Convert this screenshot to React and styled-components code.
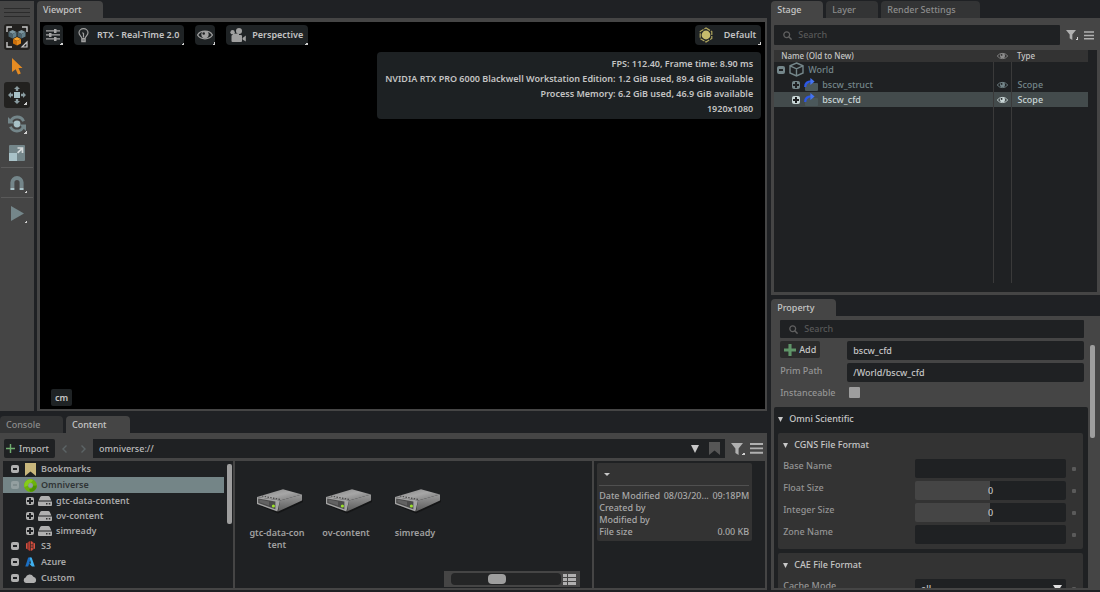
import React, { useState } from 'react';
import styled, { createGlobalStyle, css } from 'styled-components';

const GlobalStyle = createGlobalStyle`
  * { box-sizing: border-box; }

  body {
    margin: 0;
    background: #1f2124;
    overflow: hidden;
  }

  body, button, input, select, table {
    font-family: "Noto Sans", "Open Sans", sans-serif;
    font-size: 9px;
    font-weight: 500;
    line-height: 12px;
    color: #bcbcbc;
  }

  button, input, select {
    margin: 0;
    padding: 0;
    border: 0;
    border-radius: 0;
    background: none;
    outline: none;
  }
`;

/* ---------- icons ---------- */

const Svg = styled.svg`
  display: block;
  flex: none;
  fill: ${p => p.$fill || 'currentColor'};
`;

function Icon({ w, h, box, fill, children }) {
  return (
    <Svg width={w} height={h || w} viewBox={box || `0 0 ${w} ${h || w}`} $fill={fill} aria-hidden="true">
      {children}
    </Svg>
  );
}

const Cube = ({ x, y, top, left, right }) => (
  <g transform={`translate(${x} ${y})`}>
    <path d="M4 0 8 2 4 4 0 2z" fill={top} />
    <path d="M0 2 4 4V8.5L0 6.5z" fill={left} />
    <path d="M8 2 4 4V8.5L8 6.5z" fill={right} />
  </g>
);

const SelectModeIcon = () => (
  <Icon w={22}>
    <path d="M1 6V1H6M16 1H21V6M1 16V21H6" fill="none" stroke="#c8c8c8" strokeWidth="1.4" />
    <path d="M21 16V21H16z" fill="none" stroke="#c8c8c8" strokeWidth="1.2" />
    <Cube x={2.5} y={4} top="#7d97a0" left="#4b626c" right="#62808b" />
    <Cube x={11.5} y={4} top="#7d97a0" left="#4b626c" right="#62808b" />
    <Cube x={7} y={11} top="#f7a52f" left="#c96f0c" right="#e48a1c" />
  </Icon>
);

const CursorIcon = () => (
  <Icon w={12} h={17} fill="#e58b22">
    <path d="M1 0 11.5 10H7.5L9.8 15.4 7 16.6 4.7 11.2 1 14z" />
  </Icon>
);

const MoveIcon = () => (
  <Icon w={18} fill="#8a9ca1">
    <rect x="6" y="6" width="6" height="6" fill="#a9c2c8" />
    <path d="M9 0 12 3H10.2V5H7.8V3H6zM9 18 6 15H7.8V13H10.2V15H12zM0 9 3 6V7.8H5V10.2H3V12zM18 9 15 12V10.2H13V7.8H15V6z" />
  </Icon>
);

const RotateIcon = () => (
  <Icon w={18} fill="#74868a">
    <circle cx="9" cy="9" r="3.4" fill="#a9c2c8" />
    <path d="M2.6 6.6A7 7 0 0 1 15.6 6.2" fill="none" stroke="#74868a" strokeWidth="2.8" />
    <path d="M15.4 11.4A7 7 0 0 1 2.4 11.8" fill="none" stroke="#74868a" strokeWidth="2.8" />
    <path d="M0 2V8.6H6.6zM18 16V9.4H11.4z" />
  </Icon>
);

const ScaleIcon = () => (
  <Icon w={16} fill="#74868a">
    <rect width="16" height="16" rx="1" />
    <rect y="8" width="8" height="8" fill="#a9c2c8" />
    <path d="M8.5 3H13.5V8M13.2 3.3 8.6 7.9" fill="none" stroke="#d5dadb" strokeWidth="1.7" />
  </Icon>
);

const MagnetIcon = () => (
  <Icon w={14}>
    <path d="M2.4 11V6.6A4.6 4.6 0 0 1 11.6 6.6V11" fill="none" stroke="#74868a" strokeWidth="4" />
    <path d="M.4 11.5H4.4V14H.4zM9.6 11.5H13.6V14H9.6z" fill="#a9c2c8" />
  </Icon>
);

const PlayIcon = () => (
  <Icon w={13} h={15} fill="#74868a"><path d="M0 0 13 7.5 0 15z" /></Icon>
);

const SlidersIcon = () => (
  <Icon w={14} h={12} fill="#a8a8a8">
    <path d="M0 1.2H14V2.6H0zM0 5.2H14V6.6H0zM0 9.2H14V10.6H0z" />
    <path d="M8 0H10.5V4H8zM3 4H5.5V8H3zM8 8H10.5V12H8z" />
  </Icon>
);

const BulbIcon = () => (
  <Icon w={11} h={15}>
    <path d="M3.8 10C3.6 8.4 1 7.4 1 4.8A4.5 4.2 0 0 1 10 4.8C10 7.4 7.4 8.4 7.2 10V13.6H3.8zM3.8 10.6H7.2M3.8 12.2H7.2M5.5 9.6V5.6L4.4 4.6" fill="none" stroke="#a0a0a0" strokeWidth="1.2" />
  </Icon>
);

const EyeIcon = ({ w = 14, h = 10, color = '#a0a0a0', hole = '#1f2123' }) => (
  <Icon w={w} h={h} box="0 0 14 10">
    <path d="M.5 5C3 .6 11 .6 13.5 5 11 9.4 3 9.4 .5 5z" fill="none" stroke={color} strokeWidth="1.1" />
    <circle cx="7" cy="4.6" r="3.2" fill={color} />
    <circle cx="5.9" cy="3.6" r="1.1" fill={hole} />
  </Icon>
);

const CameraIcon = () => (
  <Icon w={16} h={14} fill="#a0a0a0">
    <circle cx="2.6" cy="4.3" r="2.2" />
    <circle cx="9" cy="3" r="3" />
    <rect x="1.5" y="7" width="10.5" height="7" rx="1" />
    <path d="M12.6 10 15.8 7.4V13.6L12.6 11.4z" />
    <path d="M3 5.6H9V8H3z" />
  </Icon>
);

const SunIcon = () => (
  <Icon w={14} h={16} fill="#c5bb6c">
    <path d="M7 1 12.8 4.5V11.5L7 15 1.2 11.5V4.5z" fill="none" stroke="#b0a65e" strokeWidth="1.2" strokeDasharray="4.6 1" />
    <circle cx="7" cy="8" r="4.4" />
  </Icon>
);

const SearchIcon = () => (
  <Icon w={9}>
    <circle cx="3.7" cy="3.7" r="2.9" fill="none" stroke="#606060" strokeWidth="1.3" />
    <path d="M5.8 5.8 8.6 8.6" stroke="#606060" strokeWidth="1.5" />
  </Icon>
);

const FilterIcon = ({ w = 10, h = 10 }) => (
  <Icon w={w} h={h} box="0 0 12 12" fill="#b0b0b0"><path d="M0 0H12L7.6 5.4V12L4.4 10V5.4z" /></Icon>
);

const MenuIcon = ({ w = 10, h = 9 }) => (
  <Icon w={w} h={h} box="0 0 12 10" fill="#b0b0b0">
    <path d="M0 0H12V1.8H0zM0 4H12V5.8H0zM0 8H12V9.8H0z" />
  </Icon>
);

const WorldIcon = () => (
  <Icon w={15}>
    <path d="M7.5 1 14 3.8V11L7.5 14 1 11V3.8zM1 3.8 7.5 6.8 14 3.8M7.5 6.8V14" fill="none" stroke="#74868a" strokeWidth="1.4" />
  </Icon>
);

const ReferenceIcon = () => (
  <Icon w={14} h={13}>
    <path d="M3 5H13A1 1 0 0 1 14 6V12A1 1 0 0 1 13 13H2A1 1 0 0 1 1 12V8z" fill="#4b585b" />
    <path d="M1.2 9C1.2 5 3.4 3.4 7.4 3.4" fill="none" stroke="#2d58e6" strokeWidth="2.2" />
    <path d="M6.4 0 10.6 3.6 6.4 7z" fill="#4474f2" />
  </Icon>
);

const BookmarkIcon = ({ fill }) => (
  <Icon w={11} h={13} fill={fill}><path d="M0 0H11V13L5.5 8.5 0 13z" /></Icon>
);

const OmniverseIcon = () => (
  <Icon w={13}>
    <circle cx="6.5" cy="6.5" r="4.5" fill="none" stroke="#6cb30a" strokeWidth="4" />
    <path d="M6.5 .2A6.3 6.3 0 0 0 .4 8L4.2 6.4C4.3 5 5.2 4.2 6.8 4.2L9 1z" fill="#86cc1a" />
    <path d="M12.8 6.5A6.3 6.3 0 0 1 6.5 12.8L5 10.4C7.4 10.4 8.8 9 8.9 6.8z" fill="#4d9400" />
    <circle cx="6.6" cy="6.4" r="2.3" fill="#93a39b" />
  </Icon>
);

const DriveIcon = () => (
  <Icon w={14} h={10} fill="#b0b0b0">
    <path d="M4 0H10A2 2 0 0 1 11.8 1L13.4 4.4H.6L2.2 1A2 2 0 0 1 4 0z" />
    <path d="M0 5.4H14V9A1 1 0 0 1 13 10H1A1 1 0 0 1 0 9z" />
    <path d="M8 7H9.5V8.4H8zM10.8 7H12.3V8.4H10.8z" fill="#333" />
  </Icon>
);

const S3Icon = () => (
  <Icon w={9} h={10} fill="#d9503f">
    <path d="M0 2.4 1.6 1.6V8.4L0 7.6zM9 2.4 7.4 1.6V8.4L9 7.6z" />
    <path d="M4.2 0V10L2.2 9V1z" fill="#b83d31" />
    <path d="M4.8 0 6.8 1V3.4H4.8zM4.8 4.2H6.8V5.8H4.8zM4.8 6.6H6.8V9L4.8 10z" />
  </Icon>
);

const AzureIcon = () => (
  <Icon w={10} h={10}>
    <path d="M3.2 .4H6L3.2 9.4H.3z" fill="#1b6fc4" />
    <path d="M4.6 .4H6.6L9.8 9.6H7L4 6.6H6z" fill="#3fb0ee" />
  </Icon>
);

const CloudIcon = () => (
  <Icon w={14} h={9} fill="#b0b0b0">
    <path d="M3 9A2.8 2.8 0 0 1 2.6 3.6 4.2 4.2 0 0 1 10.4 2.8 3.2 3.2 0 0 1 11 9z" />
  </Icon>
);

const BoxIcon = () => (
  <Icon w={11}><path d="M1.5 11V1.5H9.5V11" fill="none" stroke="#b0b0b0" /></Icon>
);

const HardDrive = () => (
  <Icon w={54} h={29} box="-6 -3 54 29">
    <defs>
      <linearGradient id="driveTop" x1="0" y1="0" x2="1" y2="1">
        <stop offset="0" stopColor="#848484" />
        <stop offset="0.5" stopColor="#a6a6a6" />
        <stop offset="1" stopColor="#747474" />
      </linearGradient>
      <linearGradient id="driveSide" x1="0" y1="0" x2="0" y2="1">
        <stop offset="0" stopColor="#9a9a9a" />
        <stop offset="1" stopColor="#5c5c5c" />
      </linearGradient>
    </defs>
    <path d="M4 18 22 25.5 47 14V12z" fill="#141516" />
    <path d="M1 9 27 1.2 46 6.6 24 12.6z" fill="url(#driveTop)" />
    <path d="M24 12.6 46 6.6V12.6L22 23.6z" fill="url(#driveSide)" />
    <path d="M1 9 24 12.6 21.4 23.6 1 16z" fill="#a4a4a4" />
    <path d="M2.2 10.4 19.4 13.4V21.2L2.2 15z" fill="#4b4b4b" />
    <path d="M3.4 11.6 13 13.4V17.4L3.4 14.2z" fill="#626262" />
    <path d="M6 8 24 11.4" stroke="#454545" strokeWidth="1.2" strokeDasharray="1.4 1.4" />
    <circle cx="17.4" cy="18" r="1.6" fill="#9be02a" />
  </Icon>
);

const ListIcon = () => (
  <Icon w={13} h={11} fill="#b0b0b0">
    <path d="M0 0H4V3H0zM5 0H13V3H5zM0 4H4V7H0zM5 4H13V7H5zM0 8H4V11H0zM5 8H13V11H5z" />
  </Icon>
);

const Down = ({ w = 5, h = 5, fill = '#c8c8c8' }) => (
  <Svg width={w} height={h} viewBox="0 0 8 8" preserveAspectRatio="none" $fill={fill} aria-hidden="true">
    <path d="M0 0H8L4 8z" />
  </Svg>
);

const Chevron = ({ d }) => (
  <Icon w={5} h={8}><path d={d} fill="none" stroke="#5c6466" strokeWidth="1.4" /></Icon>
);

const Plus = ({ size, color, weight }) => (
  <Icon w={size} box="0 0 10 10">
    <path d="M5 0V10M0 5H10" stroke={color} strokeWidth={weight} />
  </Icon>
);

/* ---------- docking ---------- */

const Workspace = styled.div`
  display: grid;
  grid-template-columns: minmax(0, 7fr) minmax(0, 3fr);
  gap: 4px;
  height: 100vh;
  padding: 1px 0 2px;
  background: #1f2124;
`;

const Column = styled.div`
  display: flex;
  flex-direction: column;
  min-width: 0;
  min-height: 0;
  gap: ${p => p.$gap};
`;

const TopRow = styled.div`
  display: flex;
  flex: 1;
  min-height: 0;
  gap: 3px;
`;

const Dock = styled.section`
  display: flex;
  flex-direction: column;
  min-width: 0;
  min-height: 0;
  flex: ${p => p.$flex || '1'};
`;

const TabBar = styled.div`
  display: flex;
  gap: 3px;
  flex: none;
`;

const Tab = styled.button`
  height: 17px;
  min-width: ${p => p.$min || '52px'};
  padding: 1px 20px 0 6px;
  text-align: left;
  border-radius: 4px 4px 0 0;
  background: ${p => (p.$active ? '#454545' : '#333435')};
  color: ${p => (p.$active ? '#c6c6c6' : '#8c8c8c')};
`;

const PanelBody = styled.div`
  display: flex;
  flex-direction: column;
  flex: 1;
  min-height: 0;
  padding: ${p => p.$pad};
  background: #454545;
`;

/* ---------- left toolbar ---------- */

const Toolbar = styled.nav`
  display: flex;
  flex-direction: column;
  width: 34px;
  padding: 7px 1px 0;
  background: #454545;
`;

const Grip = styled.div`
  height: 9px;
  margin: 0 3px 5px;
  background: repeating-linear-gradient(#2b2b2b 0 1px, #454545 1px 4px);
`;

const ToolGroup = styled.div`
  display: flex;
  flex-direction: column;
  align-items: center;
  gap: 3px;
  padding: 2px 0 1px;
  border-bottom: 1px solid ${p => (p.$last ? 'transparent' : '#5a5a5a')};
`;

// small notch in the lower right corner, marks a button that opens a menu
const notch = css`
  position: relative;

  &::after {
    content: "";
    position: absolute;
    right: ${p => p.$notch || '0'};
    bottom: ${p => p.$notch || '0'};
    width: 3px;
    height: 3px;
    background: linear-gradient(135deg, transparent 50%, #d0d0d0 50%);
  }
`;

const Tool = styled.button`
  display: flex;
  align-items: center;
  justify-content: center;
  width: 26px;
  height: 26px;
  border-radius: 3px;
  background: ${p => (p.$active ? '#22211f' : 'transparent')};
  ${p => p.$menu && notch}
`;

/* ---------- viewport ---------- */

const Canvas = styled.div`
  display: flex;
  flex-direction: column;
  flex: 1;
  min-height: 0;
  padding: 3px 4px 3px 3px;
  background: #000;
`;

const ViewportBar = styled.div`
  display: flex;
  gap: 11px;
`;

const ViewButton = styled.button`
  display: flex;
  align-items: center;
  justify-content: ${p => (p.$square ? 'center' : 'flex-start')};
  gap: ${p => p.$gap || '8px'};
  height: 20px;
  min-width: 20px;
  padding: ${p => (p.$square ? '0' : '0 5px 0 4px')};
  border-radius: 4px;
  background: #1f2325;
  color: #c4c4c4;
  font-weight: 600;
  ${notch}
`;

const Spacer = styled.span`
  flex: 1;
`;

const Stats = styled.div`
  align-self: flex-end;
  margin-top: 7px;
  padding: 4px 8px 3px;
  border-radius: 4px;
  background: #1d2123;
  color: #c4c4c4;
  font-weight: 600;
  text-align: right;
  line-height: 15px;
`;

const Units = styled.button`
  align-self: flex-start;
  height: 17px;
  margin: auto 0 0 8px;
  padding: 0 4px;
  border-radius: 2px;
  background: #1f2325;
  color: #c4c4c4;
  font-weight: 600;
`;

/* ---------- content browser ---------- */

const PathRow = styled.div`
  display: flex;
  align-items: center;
  height: 19px;
  margin: 0 2px 3px 1px;
  flex: none;
`;

const ImportButton = styled.button`
  display: flex;
  align-items: center;
  gap: 4px;
  height: 19px;
  padding: 0 6px 0 2px;
  border-radius: 2px;
  background: #1f2123;
`;

const NavButtons = styled.div`
  display: flex;
  justify-content: center;
  gap: 14px;
  width: 38px;
`;

const NavButton = styled.button`
  display: block;
`;

const PathField = styled.div`
  display: flex;
  align-items: center;
  gap: 10px;
  flex: 1;
  height: 19px;
  padding: 0 5px 0 6px;
  background: #1f2123;
`;

const PathInput = styled.input`
  flex: 1;
  min-width: 0;
`;

const IconButton = styled.button`
  display: flex;
  margin-left: ${p => p.$left || '0'};
  padding: 0 ${p => (p.$menu ? '2px' : '0')} 0 0;
  ${p => p.$menu && notch}
`;

const Browser = styled.div`
  display: flex;
  flex: 1;
  min-height: 0;
  gap: 2px;
`;

const TreePane = styled.div`
  display: flex;
  gap: 3px;
  width: 230px;
  padding-right: 1px;
  background: #1f2123;
  overflow: hidden;
`;

const TreeList = styled.ul`
  flex: 1;
  margin: 0;
  padding: 0;
  list-style: none;
`;

const TreeItem = styled.li`
  display: flex;
  align-items: center;
  height: ${p => (p.$child ? '15px' : '16px')};
  padding-left: ${p => (p.$child ? '23px' : '8px')};
  background: ${p => (p.$selected ? '#748587' : 'transparent')};
  color: ${p => (p.$selected ? '#303436' : '#a8a8a8')};
  font-weight: 600;
`;

const TreeIcon = styled.span`
  display: flex;
  justify-content: center;
  width: 14px;
  margin: 0 4px;
`;

const Toggle = styled.button`
  position: relative;
  flex: none;
  width: 8px;
  height: 8px;
  border-radius: 2px;
  background: ${p => p.$color};

  &::before, &::after {
    content: "";
    position: absolute;
    top: 3px;
    left: ${p => (p.$open ? '2px' : '1px')};
    width: ${p => (p.$open ? '4px' : '6px')};
    height: 2px;
    background: ${p => p.$mark || '#1f2123'};
  }

  &::after {
    display: ${p => (p.$open ? 'none' : 'block')};
    top: 1px;
    left: 3px;
    width: 2px;
    height: 6px;
  }
`;

const ScrollThumb = styled.div`
  width: 5px;
  flex: none;
  height: ${p => p.$height};
  margin-top: ${p => p.$top || '0'};
  border-radius: 2px;
  background: #9e9e9e;
`;

const FilePane = styled.div`
  display: flex;
  flex-direction: column;
  justify-content: space-between;
  flex: 1;
  min-width: 0;
  padding: 24px 12px 1px 13px;
  background: #1f2123;
`;

const Tiles = styled.div`
  display: flex;
  gap: 11px;
`;

const Tile = styled.button`
  display: flex;
  flex-direction: column;
  align-items: center;
  gap: 13px;
  width: 58px;
  color: #a0a0a0;
  font-weight: 600;
  word-break: break-all;
`;

const ZoomBar = styled.div`
  display: flex;
  align-items: center;
  align-self: flex-end;
  gap: 2px;
  height: 16px;
  padding: 0 4px 0 7px;
  background: #454545;
`;

const ZoomSlider = styled.input`
  appearance: none;
  width: 110px;
  height: 12px;
  border-radius: 4px;
  background: #242526;

  &::-webkit-slider-thumb {
    appearance: none;
    width: 18px;
    height: 10px;
    border-radius: 4px;
    background: #9e9e9e;
  }
`;

const DetailPane = styled.div`
  width: 171px;
  padding: 2px 13px 2px 3px;
  background: #1f2123;
`;

const DetailBox = styled.div`
  padding: 0 3px 3px 2px;
  border-radius: 2px;
  background: #333;
`;

const DetailHead = styled.button`
  display: flex;
  align-items: center;
  width: 100%;
  height: 23px;
  padding: 0 5px 0;
  margin-bottom: 4px;
  border-bottom: 1px solid #505050;
`;

const DetailList = styled.dl`
  margin: 0;
  color: #a8a8a8;
`;

const DetailLine = styled.div`
  display: flex;
  justify-content: space-between;
  height: 12px;
  white-space: nowrap;

  dd { margin: 0; }
`;

/* ---------- stage ---------- */

const SearchRow = styled.div`
  display: flex;
  align-items: center;
  padding: ${p => p.$pad};
  margin-bottom: ${p => p.$bottom};
  flex: none;
`;

const SearchField = styled.label`
  display: flex;
  align-items: center;
  gap: 6px;
  flex: 1;
  min-width: 0;
  height: ${p => p.$height};
  padding-left: 9px;
  border-radius: 1px;
  background: #1f2123;

  input { flex: 1; min-width: 0; }
  input::placeholder { color: #585858; opacity: 1; }
`;

const StageArea = styled.div`
  flex: 1;
  min-height: 0;
  padding: 0 9px 9px 0;
  background: #1f2123;
`;

const StageTable = styled.table`
  width: 100%;
  height: 100%;
  border-collapse: collapse;
  table-layout: fixed;

  th, td { padding: 0; text-align: left; }

  th {
    height: 12px;
    font-size: 8px;
    font-weight: 500;
    line-height: 12px;
    color: #c6c6c6;
    background: #333;
  }

  th:first-child { padding-left: 7px; }
  td + td { border-left: 1px solid #3a3a3a; }
  th:last-child, td:last-child { padding-left: 6px; }
`;

const StageRow = styled.tr`
  height: ${p => (p.$filler ? 'auto' : '15px')};
  background: ${p => (p.$selected ? '#434b4c' : 'transparent')};
  color: ${p => (p.$selected ? '#c8d6d6' : '#74868a')};
`;

const StageName = styled.div`
  display: flex;
  align-items: center;
  height: 15px;
  padding-left: ${p => (p.$child ? '18px' : '3px')};
  gap: 4px;
`;

const Center = styled.div`
  display: flex;
  justify-content: center;
`;

/* ---------- property ---------- */

const PropertyScroll = styled.div`
  display: flex;
  gap: 2px;
  flex: 1;
  min-height: 0;
  overflow: hidden;
`;

const PropertyMain = styled.div`
  display: flex;
  flex-direction: column;
  flex: 1;
  min-width: 0;
`;

const PrimForm = styled.div`
  display: grid;
  grid-template-columns: 61px minmax(0, 1fr);
  gap: 3px 6px;
  padding: 0 4px 0 6px;
  margin-bottom: 6px;
  color: #949494;

  label { line-height: 15px; }
`;

const AddButton = styled.button`
  display: flex;
  align-items: center;
  justify-self: start;
  gap: 3px;
  height: 17px;
  padding: 0 4px;
  border-radius: 2px;
  background: #2b2b2b;
  color: #c6c6c6;
`;

const TextInput = styled.input`
  width: 100%;
  height: 19px;
  padding: 0 6px;
  border-radius: 2px;
  background: #1f2123;
  color: #c6c6c6;
`;

const CheckBox = styled.input`
  appearance: none;
  width: 11px;
  height: 11px;
  margin: 2px 2px 3px;
  border-radius: 1px;
  background: #9e9e9e;
`;

const Section = styled.div`
  display: flex;
  flex-direction: column;
  gap: 4px;
  padding: 0 5px 0 4px;
  border-radius: 2px 2px 0 0;
  background: #1f2123;
`;

const SectionTitle = styled.button`
  display: flex;
  align-items: center;
  gap: 6px;
  height: 22px;
  padding-top: 2px;
  color: #c6c6c6;
`;

const Group = styled.div`
  padding: 0 5px 2px;
  border-radius: 2px;
  background: #333;
`;

const GroupTitle = styled(SectionTitle)`
  margin-bottom: 4px;
`;

const Field = styled.div`
  display: grid;
  grid-template-columns: minmax(0, 132fr) minmax(0, 151fr) 12px;
  align-items: center;
  height: 22px;
  padding-bottom: 3px;
  color: #949494;

  label { padding-bottom: 5px; }
`;

const NumberInput = styled(TextInput)`
  text-align: center;
  background: linear-gradient(90deg, #454545 50%, #1f2123 50%);
`;

const SelectBox = styled.div`
  display: grid;
  align-items: center;

  > * { grid-area: 1 / 1; }
  > svg { justify-self: end; margin-right: 4px; }
`;

const Select = styled.select`
  appearance: none;
  width: 100%;
  height: 19px;
  padding: 0 6px;
  border-radius: 2px;
  background: #1f2123;
  color: #c6c6c6;
`;

const Dot = styled.i`
  width: 4px;
  height: 4px;
  margin-left: 6px;
  border-radius: 1px;
  background: #5a5a5a;
`;

const treeItems = [
  { name: 'Bookmarks', icon: <BookmarkIcon fill="#c9b77c" />, open: true },
  { name: 'Omniverse', icon: <OmniverseIcon />, open: true, selected: true },
  { name: 'gtc-data-content', icon: <DriveIcon />, child: true },
  { name: 'ov-content', icon: <DriveIcon />, child: true },
  { name: 'simready', icon: <DriveIcon />, child: true },
  { name: 'S3', icon: <S3Icon />, open: true },
  { name: 'Azure', icon: <AzureIcon />, open: true },
  { name: 'Custom', icon: <CloudIcon />, open: true },
];

const prims = [
  { name: 'World', root: true },
  { name: 'bscw_struct', type: 'Scope' },
  { name: 'bscw_cfd', type: 'Scope', selected: true },
];

function ToolbarPanel() {
  return (
    <Toolbar>
      <Grip />
      <ToolGroup>
        <Tool $active aria-label="Select mode"><SelectModeIcon /></Tool>
        <Tool aria-label="Select"><CursorIcon /></Tool>
        <Tool $active $menu $notch="3px" aria-label="Move"><MoveIcon /></Tool>
        <Tool $menu $notch="3px" aria-label="Rotate"><RotateIcon /></Tool>
        <Tool aria-label="Scale"><ScaleIcon /></Tool>
      </ToolGroup>
      <ToolGroup>
        <Tool $menu $notch="3px" aria-label="Snap"><MagnetIcon /></Tool>
      </ToolGroup>
      <ToolGroup $last>
        <Tool $menu $notch="3px" aria-label="Play"><PlayIcon /></Tool>
      </ToolGroup>
    </Toolbar>
  );
}

function ViewportPanel() {
  return (
    <Dock>
      <TabBar><Tab $active $min="66px">Viewport</Tab></TabBar>
      <PanelBody $pad="4px 2px 2px 3px">
        <Canvas>
          <ViewportBar>
            <ViewButton $square aria-label="Settings"><SlidersIcon /></ViewButton>
            <ViewButton><BulbIcon />RTX - Real-Time 2.0</ViewButton>
            <ViewButton $square aria-label="Visibility"><EyeIcon w={16} h={12} /></ViewButton>
            <ViewButton $gap="6px"><CameraIcon />Perspective</ViewButton>
            <Spacer />
            <ViewButton $gap="11px"><SunIcon />Default</ViewButton>
          </ViewportBar>
          <Stats>
            <div>FPS: 112.40, Frame time: 8.90 ms</div>
            <div>NVIDIA RTX PRO 6000 Blackwell Workstation Edition: 1.2 GiB used, 89.4 GiB available</div>
            <div>Process Memory: 6.2 GiB used, 46.9 GiB available</div>
            <div>1920x1080</div>
          </Stats>
          <Units>cm</Units>
        </Canvas>
      </PanelBody>
    </Dock>
  );
}

function ContentPanel() {
  const [path, setPath] = useState('omniverse://');
  const [zoom, setZoom] = useState(40);

  return (
    <Dock $flex="0 0 174px">
      <TabBar>
        <Tab $min="63px">Console</Tab>
        <Tab $active $min="64px">Content</Tab>
      </TabBar>
      <PanelBody $pad="6px 2px 2px 3px">
        <PathRow>
          <ImportButton><Plus size={9} color="#6fae6f" weight="1.6" />Import</ImportButton>
          <NavButtons>
            <NavButton aria-label="Back"><Chevron d="M4.5 .5 1 4 4.5 7.5" /></NavButton>
            <NavButton aria-label="Forward"><Chevron d="M.5 .5 4 4 .5 7.5" /></NavButton>
          </NavButtons>
          <PathField>
            <PathInput aria-label="Path" value={path} onChange={e => setPath(e.target.value)} />
            <Down w={8} h={8} />
            <BookmarkIcon fill="#565656" />
          </PathField>
          <IconButton $left="6px" $menu aria-label="Filter"><FilterIcon w={12} h={12} /></IconButton>
          <IconButton $left="5px" aria-label="Options"><MenuIcon w={13} h={11} /></IconButton>
        </PathRow>
        <Browser>
          <TreePane>
            <TreeList>
              {treeItems.map(item => (
                <TreeItem key={item.name} $child={item.child} $selected={item.selected}>
                  <Toggle
                    $open={item.open}
                    $color={item.selected ? '#939fa0' : '#b0b0b0'}
                    $mark={item.selected && '#7f8c8d'}
                    aria-label={`Toggle ${item.name}`}
                  />
                  <TreeIcon>{item.icon}</TreeIcon>
                  {item.name}
                </TreeItem>
              ))}
              <TreeItem $child>
                <BoxIcon />
              </TreeItem>
            </TreeList>
            <ScrollThumb $height="60px" $top="3px" />
          </TreePane>
          <FilePane>
            <Tiles>
              {['gtc-data-content', 'ov-content', 'simready'].map(name => (
                <Tile key={name}><HardDrive />{name}</Tile>
              ))}
            </Tiles>
            <ZoomBar>
              <ZoomSlider
                type="range"
                aria-label="Thumbnail size"
                value={zoom}
                onChange={e => setZoom(Number(e.target.value))}
              />
              <IconButton aria-label="List view"><ListIcon /></IconButton>
            </ZoomBar>
          </FilePane>
          <DetailPane>
            <DetailBox>
              <DetailHead aria-label="Collapse details"><Down w={6} h={3} /></DetailHead>
              <DetailList>
                <DetailLine><dt>Date Modified</dt><dd>08/03/20...</dd><dd>09:18PM</dd></DetailLine>
                <DetailLine><dt>Created by</dt></DetailLine>
                <DetailLine><dt>Modified by</dt></DetailLine>
                <DetailLine><dt>File size</dt><dd>0.00 KB</dd></DetailLine>
              </DetailList>
            </DetailBox>
          </DetailPane>
        </Browser>
      </PanelBody>
    </Dock>
  );
}

function StagePanel() {
  return (
    <Dock>
      <TabBar>
        <Tab $active>Stage</Tab>
        <Tab>Layer</Tab>
        <Tab $min="99px">Render Settings</Tab>
      </TabBar>
      <PanelBody $pad="7px 3px 3px">
        <SearchRow $pad="0 3px 0 0" $bottom="5px">
          <SearchField $height="20px">
            <SearchIcon />
            <input placeholder="Search" aria-label="Search stage" />
          </SearchField>
          <IconButton $left="6px" $menu aria-label="Filter"><FilterIcon /></IconButton>
          <IconButton $left="6px" aria-label="Options"><MenuIcon /></IconButton>
        </SearchRow>
        <StageArea>
          <StageTable>
            <colgroup>
              <col />
              <col style={{ width: 18 }} />
              <col style={{ width: 77 }} />
            </colgroup>
            <thead>
              <tr>
                <th>Name (Old to New)</th>
                <th><Center><EyeIcon w={11} h={8} color="#8c8c8c" hole="#333" /></Center></th>
                <th>Type</th>
              </tr>
            </thead>
            <tbody>
              {prims.map(prim => {
                const color = prim.selected ? '#c8d6d6' : '#74868a';
                return (
                  <StageRow key={prim.name} $selected={prim.selected}>
                    <td>
                      <StageName $child={!prim.root}>
                        <Toggle $open={prim.root} $color={color} aria-label={`Toggle ${prim.name}`} />
                        {prim.root ? <WorldIcon /> : <ReferenceIcon />}
                        {prim.name}
                      </StageName>
                    </td>
                    <td>{prim.type && <Center><EyeIcon w={11} h={8} color={color} /></Center>}</td>
                    <td>{prim.type}</td>
                  </StageRow>
                );
              })}
              <StageRow $filler><td /><td /><td /></StageRow>
            </tbody>
          </StageTable>
        </StageArea>
      </PanelBody>
    </Dock>
  );
}

function PropertyPanel() {
  const [name, setName] = useState('bscw_cfd');
  const [primPath, setPrimPath] = useState('/World/bscw_cfd');

  return (
    <Dock $flex="0 1 291px">
      <TabBar><Tab $active $min="65px">Property</Tab></TabBar>
      <PanelBody $pad="4px 5px 2px 3px">
        <PropertyScroll>
          <PropertyMain>
            <SearchRow $pad="0 4px 0 6px" $bottom="3px">
              <SearchField $height="18px">
                <SearchIcon />
                <input placeholder="Search" aria-label="Search properties" />
              </SearchField>
            </SearchRow>
            <PrimForm>
              <AddButton><Plus size={12} color="#5f9468" weight="2.6" />Add</AddButton>
              <TextInput aria-label="Name" value={name} onChange={e => setName(e.target.value)} />
              <label htmlFor="primPath">Prim Path</label>
              <TextInput id="primPath" value={primPath} onChange={e => setPrimPath(e.target.value)} />
              <label htmlFor="instanceable">Instanceable</label>
              <CheckBox id="instanceable" type="checkbox" />
            </PrimForm>
            <Section>
              <SectionTitle><Down />Omni Scientific</SectionTitle>
              <Group>
                <GroupTitle><Down />CGNS File Format</GroupTitle>
                <Field>
                  <label htmlFor="baseName">Base Name</label>
                  <TextInput id="baseName" />
                  <Dot />
                </Field>
                <Field>
                  <label htmlFor="floatSize">Float Size</label>
                  <NumberInput id="floatSize" defaultValue="0" />
                  <Dot />
                </Field>
                <Field>
                  <label htmlFor="integerSize">Integer Size</label>
                  <NumberInput id="integerSize" defaultValue="0" />
                  <Dot />
                </Field>
                <Field>
                  <label htmlFor="zoneName">Zone Name</label>
                  <TextInput id="zoneName" />
                  <Dot />
                </Field>
              </Group>
              <Group>
                <GroupTitle><Down />CAE File Format</GroupTitle>
                <Field>
                  <label htmlFor="cacheMode">Cache Mode</label>
                  <SelectBox>
                    <Select id="cacheMode" defaultValue="all">
                      <option>all</option>
                    </Select>
                    <Down w={9} h={7} fill="#e0e0e0" />
                  </SelectBox>
                  <Dot />
                </Field>
              </Group>
            </Section>
          </PropertyMain>
          <ScrollThumb $height="93px" $top="25px" />
        </PropertyScroll>
      </PanelBody>
    </Dock>
  );
}

function App() {
  return (
    <>
      <GlobalStyle />
      <Workspace>
        <Column $gap="5px">
          <TopRow>
            <ToolbarPanel />
            <ViewportPanel />
          </TopRow>
          <ContentPanel />
        </Column>
        <Column $gap="4px">
          <StagePanel />
          <PropertyPanel />
        </Column>
      </Workspace>
    </>
  );
}

export default App;
